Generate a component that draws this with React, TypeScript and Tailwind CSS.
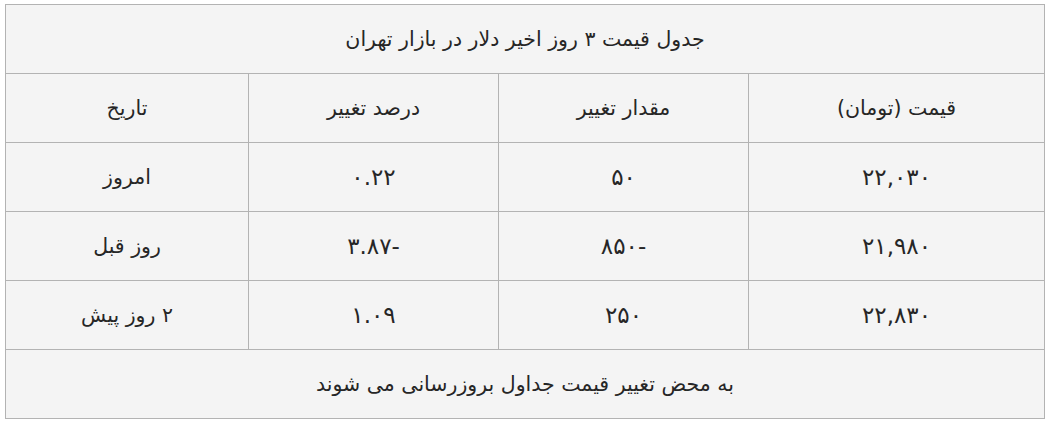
const rows = [
  { price: "۲۲,۰۳۰", change: "۵۰", percent: "۰.۲۲", date: "امروز" },
  { price: "۲۱,۹۸۰", change: "-۸۵۰", percent: "-۳.۸۷", date: "روز قبل" },
  { price: "۲۲,۸۳۰", change: "۲۵۰", percent: "۱.۰۹", date: "۲ روز پیش" },
];

const cell = "border border-[#b3b3b3] h-[69px] p-0 text-center align-middle";
const num = `${cell} text-[23px]`;

export default function App() {
  return (
    <div className="bg-white min-h-[421px] pt-[4px] pl-[5px]">
      <table
        dir="rtl"
        className="w-[1039px] table-fixed border-collapse bg-[#f4f4f4] text-[20.5px] text-[#262626]"
        style={{ fontFamily: '"DejaVu Sans", "Noto Sans", sans-serif' }}
      >
        <colgroup>
          <col className="w-[296px]" />
          <col className="w-[250px]" />
          <col className="w-[250px]" />
          <col className="w-[243px]" />
        </colgroup>
        <thead>
          <tr>
            <th colSpan={4} className={`${cell} font-normal`}>
              جدول قیمت ۳ روز اخیر دلار در بازار تهران
            </th>
          </tr>
          <tr>
            <th className={`${cell} font-normal`}>قیمت (تومان)</th>
            <th className={`${cell} font-normal`}>مقدار تغییر</th>
            <th className={`${cell} font-normal`}>درصد تغییر</th>
            <th className={`${cell} font-normal`}>تاریخ</th>
          </tr>
        </thead>
        <tbody>
          {rows.map(r => (
            <tr key={r.date}>
              <td className={num}>{r.price}</td>
              <td className={num}>{r.change}</td>
              <td className={num}>{r.percent}</td>
              <td className={cell}>{r.date}</td>
            </tr>
          ))}
          <tr>
            <td colSpan={4} className={cell}>
              به محض تغییر قیمت جداول بروزرسانی می شوند
            </td>
          </tr>
        </tbody>
      </table>
    </div>
  );
}
